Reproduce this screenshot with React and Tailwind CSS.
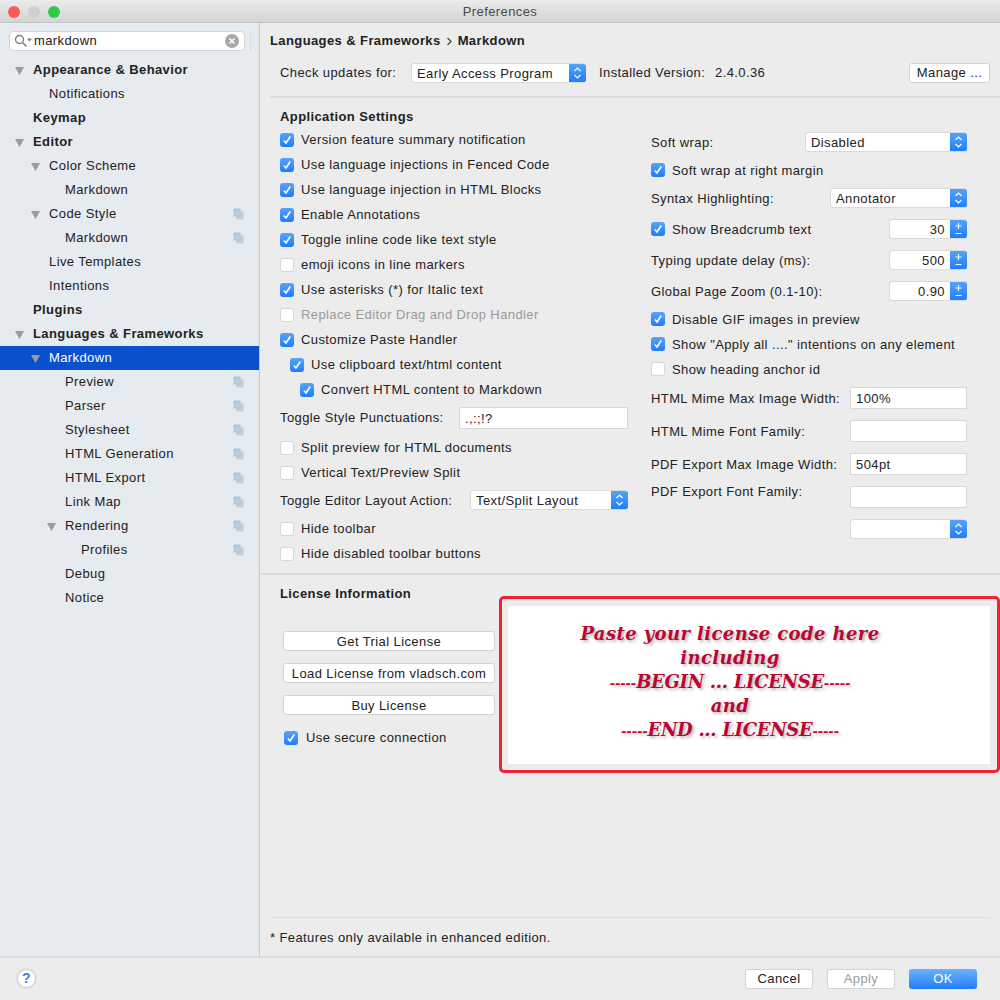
import React from 'react';

const treeItems = [
  { label: 'Appearance & Behavior', level: 0, bold: true, arrow: true },
  { label: 'Notifications', level: 1 },
  { label: 'Keymap', level: 0, bold: true },
  { label: 'Editor', level: 0, bold: true, arrow: true },
  { label: 'Color Scheme', level: 1, arrow: true },
  { label: 'Markdown', level: 2 },
  { label: 'Code Style', level: 1, arrow: true, copy: true },
  { label: 'Markdown', level: 2, copy: true },
  { label: 'Live Templates', level: 1 },
  { label: 'Intentions', level: 1 },
  { label: 'Plugins', level: 0, bold: true },
  { label: 'Languages & Frameworks', level: 0, bold: true, arrow: true },
  { label: 'Markdown', level: 1, arrow: true, selected: true },
  { label: 'Preview', level: 2, copy: true },
  { label: 'Parser', level: 2, copy: true },
  { label: 'Stylesheet', level: 2, copy: true },
  { label: 'HTML Generation', level: 2, copy: true },
  { label: 'HTML Export', level: 2, copy: true },
  { label: 'Link Map', level: 2, copy: true },
  { label: 'Rendering', level: 2, arrow: true, copy: true },
  { label: 'Profiles', level: 3, copy: true },
  { label: 'Debug', level: 2 },
  { label: 'Notice', level: 2 },
];

const indent = ['pl-[33px]', 'pl-[49px]', 'pl-[65px]', 'pl-[81px]'];

const Arrow = () => (
  <span className="w-[18px] -ml-[18px] flex items-center">
    <svg width="9" height="9" viewBox="0 0 9 9"><path d="M0 1h9L4.500 9z" fill="#9b9b9b" /></svg>
  </span>
);

const CopyIcon = () => (
  <svg width="11" height="12" viewBox="0 0 11 12" className="ml-auto mr-[15px] shrink-0">
    <rect x="0.5" y="0.500" width="7" height="8" rx="1" fill="#a9c8de" />
    <rect x="3" y="3" width="7.500" height="8.500" rx="1" fill="#c3cdd5" />
    <path d="M5 4.500v5M7 4.500v5" stroke="#a9c8de" strokeWidth="1" />
  </svg>
);

const TreeRow = ({ item }) => (
  <div className={`h-6 flex items-center ${indent[item.level]} ${item.selected ? 'bg-[#0a50ce] text-white' : 'text-[#222222]'} ${item.bold ? 'font-bold' : ''}`}>
    {item.arrow && <Arrow />}
    <span>{item.label}</span>
    {item.copy && <CopyIcon />}
  </div>
);

const Checkbox = ({ checked }) => (
  <span className={`w-[14px] h-[14px] rounded-[3px] shrink-0 flex items-center justify-center ${checked ? 'bg-gradient-to-b from-[#56a4fd] to-[#1b7cf8]' : 'bg-white border border-[#d6d6d6]'}`}>
    {checked && (
      <svg width="10" height="10" viewBox="0 0 10 10"><path d="M1.800 5.400 4 8 8.300 1.500" fill="none" stroke="white" strokeWidth="1.600" /></svg>
    )}
  </span>
);

const Check = ({ label, checked, disabled, className = 'h-[25px]', gap = 'gap-[7px]', labelClass = '', children }) => (
  <div className={`flex items-center ${gap} ${className} ${disabled ? 'text-[#9a9a9a]' : ''}`}>
    <Checkbox checked={checked} />
    <span className={labelClass}>{label}</span>
    {children}
  </div>
);

const Select = ({ value, className }) => (
  <div className={`h-5 flex bg-white rounded-[3px] border border-r-0 border-[#dadada] overflow-hidden ${className}`}>
    <span className="flex-1 pl-[5px] leading-[19px] whitespace-nowrap">{value}</span>
    <span className="w-[17px] -my-px bg-gradient-to-b from-[#56a4fd] to-[#1b7cf8] flex items-center justify-center">
      <svg width="9" height="14" viewBox="0 0 9 14"><path d="M1.500 5 4.500 2l3 3M1.500 9l3 3 3-3" fill="none" stroke="white" strokeWidth="1.200" /></svg>
    </span>
  </div>
);

const Spinner = ({ value, className = '' }) => (
  <div className={`w-[78px] h-5 flex bg-white rounded-[3px] border border-r-0 border-[#dadada] overflow-hidden ${className}`}>
    <span className="flex-1 text-right pr-[5px] leading-[19px]">{value}</span>
    <span className="w-[17px] -my-px bg-gradient-to-b from-[#56a4fd] to-[#1b7cf8] flex items-center justify-center">
      <svg width="9" height="16" viewBox="0 0 9 16"><path d="M1.500 5h6M4.500 2v6M1.500 12.500h6" fill="none" stroke="white" strokeWidth="1.100" /></svg>
    </span>
  </div>
);

const TextField = ({ value, className = 'w-[117px]' }) => (
  <div className={`h-[22px] bg-white border border-[#d8d8d8] pl-[5px] leading-[21px] ${className}`}>{value}</div>
);

const Button = ({ children, className = '' }) => (
  <div className={`h-5 bg-white rounded-[3px] border border-[#d2d2d2] flex items-center justify-center ${className}`}>{children}</div>
);

const FieldRow = ({ label, children, className = '', labelClass = '' }) => (
  <div className={`flex items-center justify-between ${className}`}>
    <span className={labelClass}>{label}</span>
    {children}
  </div>
);

const Dashes = () => <span className="text-[13px] tracking-[-0.1px]">-----</span>;

export default function App() {
  return (
    <div className="w-[1000px] h-[1000px] flex flex-col bg-[#ececec] text-[13px] tracking-[0.4px] text-[#222222] overflow-hidden font-['Liberation_Sans',sans-serif]">
      {/* Title bar */}
      <div className="h-[23px] shrink-0 flex items-center pt-px bg-gradient-to-b from-[#ebebeb] to-[#d4d4d4] border-b border-[#c4c4c4]">
        <div className="flex gap-[8px] pl-[8px]">
          <span className="w-3 h-3 rounded-full bg-[#fc5b57]" />
          <span className="w-3 h-3 rounded-full bg-[#cfcfcf]" />
          <span className="w-3 h-3 rounded-full bg-[#35c749]" />
        </div>
        <span className="flex-1 text-center pr-[60px] text-[#4a4a4a]">Preferences</span>
      </div>

      <div className="flex-1 flex min-h-0">
        {/* Sidebar */}
        <div className="w-[260px] shrink-0 bg-[#e6ebf0] border-r border-[#c8c8c8]">
          <div className="flex items-center h-5 mt-[8px] ml-[9px] mr-[8px] gap-[5px]">
            <div className="flex-1 h-5 bg-white rounded-[4px] border border-[#d5d5d5] flex items-center pl-[4px] pr-[5px]">
              <svg width="19" height="14" viewBox="0 0 19 14" className="shrink-0">
                <circle cx="5.500" cy="5.500" r="4" fill="none" stroke="#7d7d7d" strokeWidth="1.300" />
                <path d="M8.500 8.500l4 4" stroke="#7d7d7d" strokeWidth="1.600" />
                <path d="M13 4.500h5l-2.500 3z" fill="#7d7d7d" />
              </svg>
              <span className="ml-px flex-1">markdown</span>
              <svg width="14" height="14" viewBox="0 0 14 14">
                <circle cx="7" cy="7" r="7" fill="#a8a8a8" />
                <path d="M4.500 4.500l5 5M9.500 4.500l-5 5" stroke="white" strokeWidth="1.500" />
              </svg>
            </div>
            <span className="w-px h-[20px] bg-[#d5dadf]" />
          </div>
          <div className="mt-[7px]">
            {treeItems.map((item, i) => <TreeRow key={i} item={item} />)}
          </div>
        </div>

        {/* Settings pane */}
        <div className="flex-1 min-w-0 flex flex-col">
          <div className="pl-[10px] mt-[8px] h-5 flex items-center font-bold">
            Languages &amp; Frameworks
            <svg width="7" height="9" viewBox="0 0 7 9" className="mx-[5px]"><path d="M1.500 1 5 4.500 1.500 8" fill="none" stroke="#444444" strokeWidth="1.200" /></svg>
            Markdown
          </div>
          <div className="pl-[20px] pr-[10px] mt-[12px] h-5 flex items-center">
            <span className="w-[131px]">Check updates for:</span>
            <Select value="Early Access Program" className="w-[175px]" />
            <span className="ml-[13px] w-[116px]">Installed Version:</span>
            <span>2.4.0.36</span>
            <Button className="ml-auto w-[81px]">Manage ...</Button>
          </div>
          <div className="h-[2px] bg-[#dcdcdc] ml-[10px] mt-[13px] shrink-0" />

          <div className="flex pl-[20px] h-[475px] shrink-0">
            {/* Left options */}
            <div className="w-[348px] shrink-0">
              <div className="h-[23px] mt-[6px] pt-[2px] flex items-center font-bold">Application Settings</div>
              <Check checked label="Version feature summary notification" />
              <Check checked label="Use language injections in Fenced Code" />
              <Check checked label="Use language injection in HTML Blocks" />
              <Check checked label="Enable Annotations" />
              <Check checked label="Toggle inline code like text style" />
              <Check label="emoji icons in line markers" />
              <Check checked label="Use asterisks (*) for Italic text" />
              <Check disabled label="Replace Editor Drag and Drop Handler" />
              <Check checked label="Customize Paste Handler" />
              <Check checked className="h-[25px] ml-[10px]" label="Use clipboard text/html content" />
              <Check checked className="h-[25px] ml-[20px]" label="Convert HTML content to Markdown" />
              <FieldRow label="Toggle Style Punctuations:" className="h-[32px] mb-px">
                <TextField value=".,:;!?" className="w-[169px]" />
              </FieldRow>
              <Check label="Split preview for HTML documents" />
              <Check label="Vertical Text/Preview Split" />
              <FieldRow label="Toggle Editor Layout Action:" className="h-[30px] mb-px" labelClass="pt-px">
                <Select value="Text/Split Layout" className="w-[158px]" />
              </FieldRow>
              <Check label="Hide toolbar" />
              <Check label="Hide disabled toolbar buttons" />
            </div>

            {/* Right options */}
            <div className="w-[316px] shrink-0 ml-[23px]">
              <FieldRow label="Soft wrap:" className="h-6 mt-[32px]" labelClass="pt-[2px]"><Select value="Disabled" className="w-[162px]" /></FieldRow>
              <Check checked label="Soft wrap at right margin" className="h-6 mt-[4px]" labelClass="pt-[2px]" />
              <FieldRow label="Syntax Highlighting:" className="h-6 mt-[4px]" labelClass="pt-[2px]"><Select value="Annotator" className="w-[137px]" /></FieldRow>
              <Check checked label="Show Breadcrumb text" className="h-6 mt-[7px]" labelClass="pt-[2px]"><Spinner value="30" className="ml-auto" /></Check>
              <FieldRow label="Typing update delay (ms):" className="h-6 mt-[7px]" labelClass="pt-[2px]"><Spinner value="500" /></FieldRow>
              <FieldRow label="Global Page Zoom (0.1-10):" className="h-6 mt-[7px]" labelClass="pt-[2px]"><Spinner value="0.90" /></FieldRow>
              <Check checked label="Disable GIF images in preview" className="h-6 mt-[4px]" labelClass="pt-[2px]" />
              <Check checked label={'Show "Apply all ...." intentions on any element'} className="h-[25px]" labelClass="pt-[2px]" />
              <Check label="Show heading anchor id" className="h-[25px]" labelClass="pt-[2px]" />
              <FieldRow label="HTML Mime Max Image Width:" className="h-[22px] mt-[6px]" labelClass="pt-[2px]"><TextField value="100%" /></FieldRow>
              <FieldRow label="HTML Mime Font Family:" className="h-[22px] mt-[11px]" labelClass="pt-[2px]"><TextField /></FieldRow>
              <FieldRow label="PDF Export Max Image Width:" className="h-[22px] mt-[11px]" labelClass="pt-[2px]"><TextField value="504pt" /></FieldRow>
              <FieldRow label="PDF Export Font Family:" className="h-[22px] mt-[11px] items-start" labelClass="leading-[12px]"><TextField /></FieldRow>
              <div className="flex justify-end mt-[11px]"><Select value="" className="w-[117px]" /></div>
            </div>
          </div>

          <div className="h-[2px] bg-[#dcdcdc] shrink-0" />

          {/* License section */}
          <div className="flex h-[202px] shrink-0">
            <div className="w-[239px] shrink-0 pl-[20px]">
              <div className="h-5 mt-[9px] flex items-center font-bold">License Information</div>
              <div className="ml-[3px] mt-[27px] flex flex-col gap-3 w-[212px]">
                <Button className="pt-px">Get Trial License</Button>
                <Button className="pt-px">Load License from vladsch.com</Button>
                <Button className="pt-px">Buy License</Button>
              </div>
              <Check checked label="Use secure connection" gap="gap-[8px]" className="h-5 ml-[4px] mt-[13px]" />
            </div>
            <div className="h-[177px] w-[501px] mt-[21px] border-[3px] border-[#ee2233] rounded-[5px] pt-[7px] pb-[6px] pl-[6px] pr-[7px]">
              <div className="h-full bg-white pt-[16px] pr-[38px] text-center text-[18px] leading-6 tracking-[0.4px] font-bold italic text-[#b90734] [text-shadow:2px_2px_3px_rgba(0,0,0,0.28)] font-['DejaVu_Serif',serif]">
                <div className="h-6">Paste your license code here</div>
                <div className="h-6">including</div>
                <div className="h-6 tracking-[-0.3px]"><Dashes />BEGIN ... LICENSE<Dashes /></div>
                <div className="h-6">and</div>
                <div className="h-6 tracking-[-0.3px]"><Dashes />END ... LICENSE<Dashes /></div>
              </div>
            </div>
          </div>

          <div className="flex-1" />
          <div className="h-px bg-[#dcdcdc] mx-[10px] shrink-0" />
          <div className="pl-[10px] h-[38px] pt-[2px] shrink-0 flex items-center">* Features only available in enhanced edition.</div>
        </div>
      </div>

      {/* Footer */}
      <div className="h-[44px] shrink-0 border-t-2 border-[#dcdcdc] flex items-center pl-[17px] pr-[23px]">
        <span className="w-[19px] h-[19px] mb-px rounded-full bg-white border border-[#d0d0d0] shadow-[0_0_2px_rgba(0,0,0,0.15)] flex items-center justify-center text-[#2f86e8] text-[14px] font-bold">?</span>
        <Button className="ml-auto w-[68px] mb-px pt-px border-[#c4c4c4]">Cancel</Button>
        <Button className="ml-[14px] w-[68px] mb-px pt-px text-[#9a9a9a] border-[#c4c4c4]">Apply</Button>
        <div className="ml-[14px] w-[68px] h-5 mb-px pt-px rounded-[3px] bg-gradient-to-b from-[#6cb3fe] to-[#1a7cf8] text-white flex items-center justify-center">OK</div>
      </div>
    </div>
  );
}
